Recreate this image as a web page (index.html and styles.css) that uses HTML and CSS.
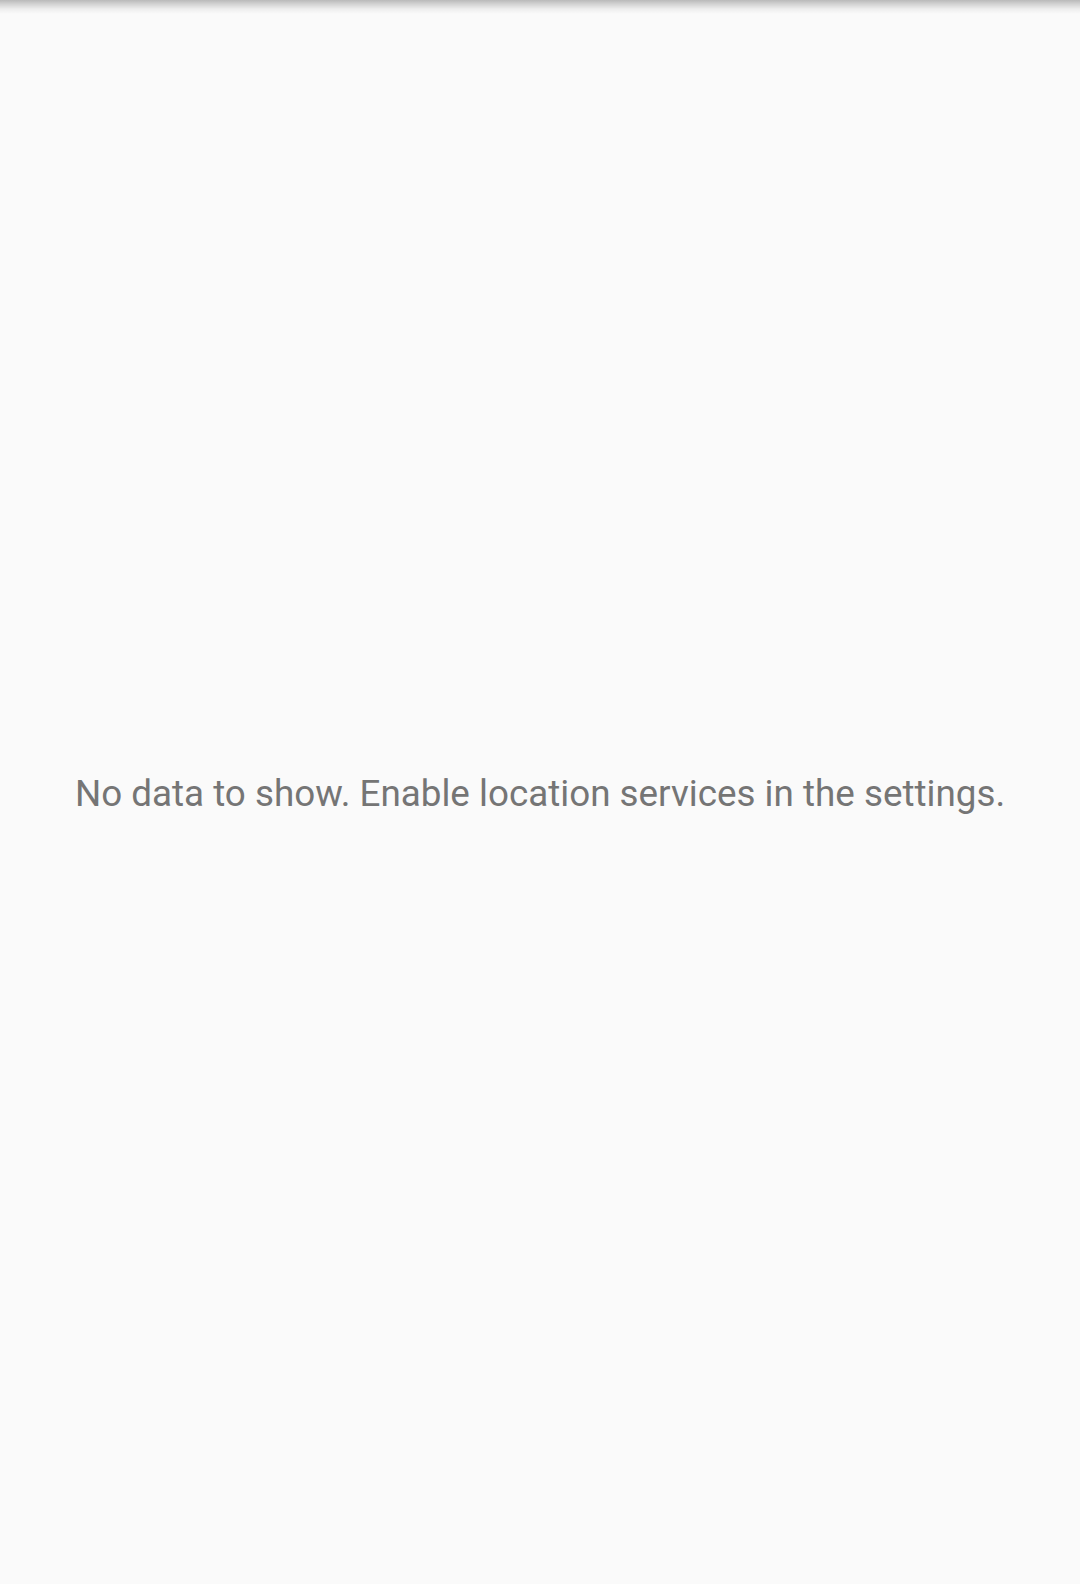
FILE: index.html
```html
<!DOCTYPE html>
<html>
<head>
<meta charset="utf-8">
<link rel="stylesheet" href="styles.css">
</head>
<body>
<div class="shadow"></div>
<main class="empty">
  <p class="message">No data to show. Enable location services in the settings.</p>
</main>
</body>
</html>
```
FILE: styles.css
```css
html, body {
  margin: 0;
  padding: 0;
  height: 100%;
}
body {
  background: #fafafa;
  font-family: Roboto, "Liberation Sans", sans-serif;
  position: relative;
  overflow: hidden;
}
.shadow {
  position: absolute;
  top: 0;
  left: 0;
  right: 0;
  height: 14px;
  background: linear-gradient(to bottom, rgba(0,0,0,0.26) 0px, rgba(0,0,0,0.16) 4px, rgba(0,0,0,0.05) 9px, rgba(0,0,0,0) 14px);
}
.empty {
  height: 100%;
  box-sizing: border-box;
  padding-top: 4px;
  display: flex;
  align-items: center;
  justify-content: center;
}
.message {
  margin: 0;
  font-size: 36.8px;
  color: #757575;
  text-align: center;
  line-height: 1.2;
}
```
